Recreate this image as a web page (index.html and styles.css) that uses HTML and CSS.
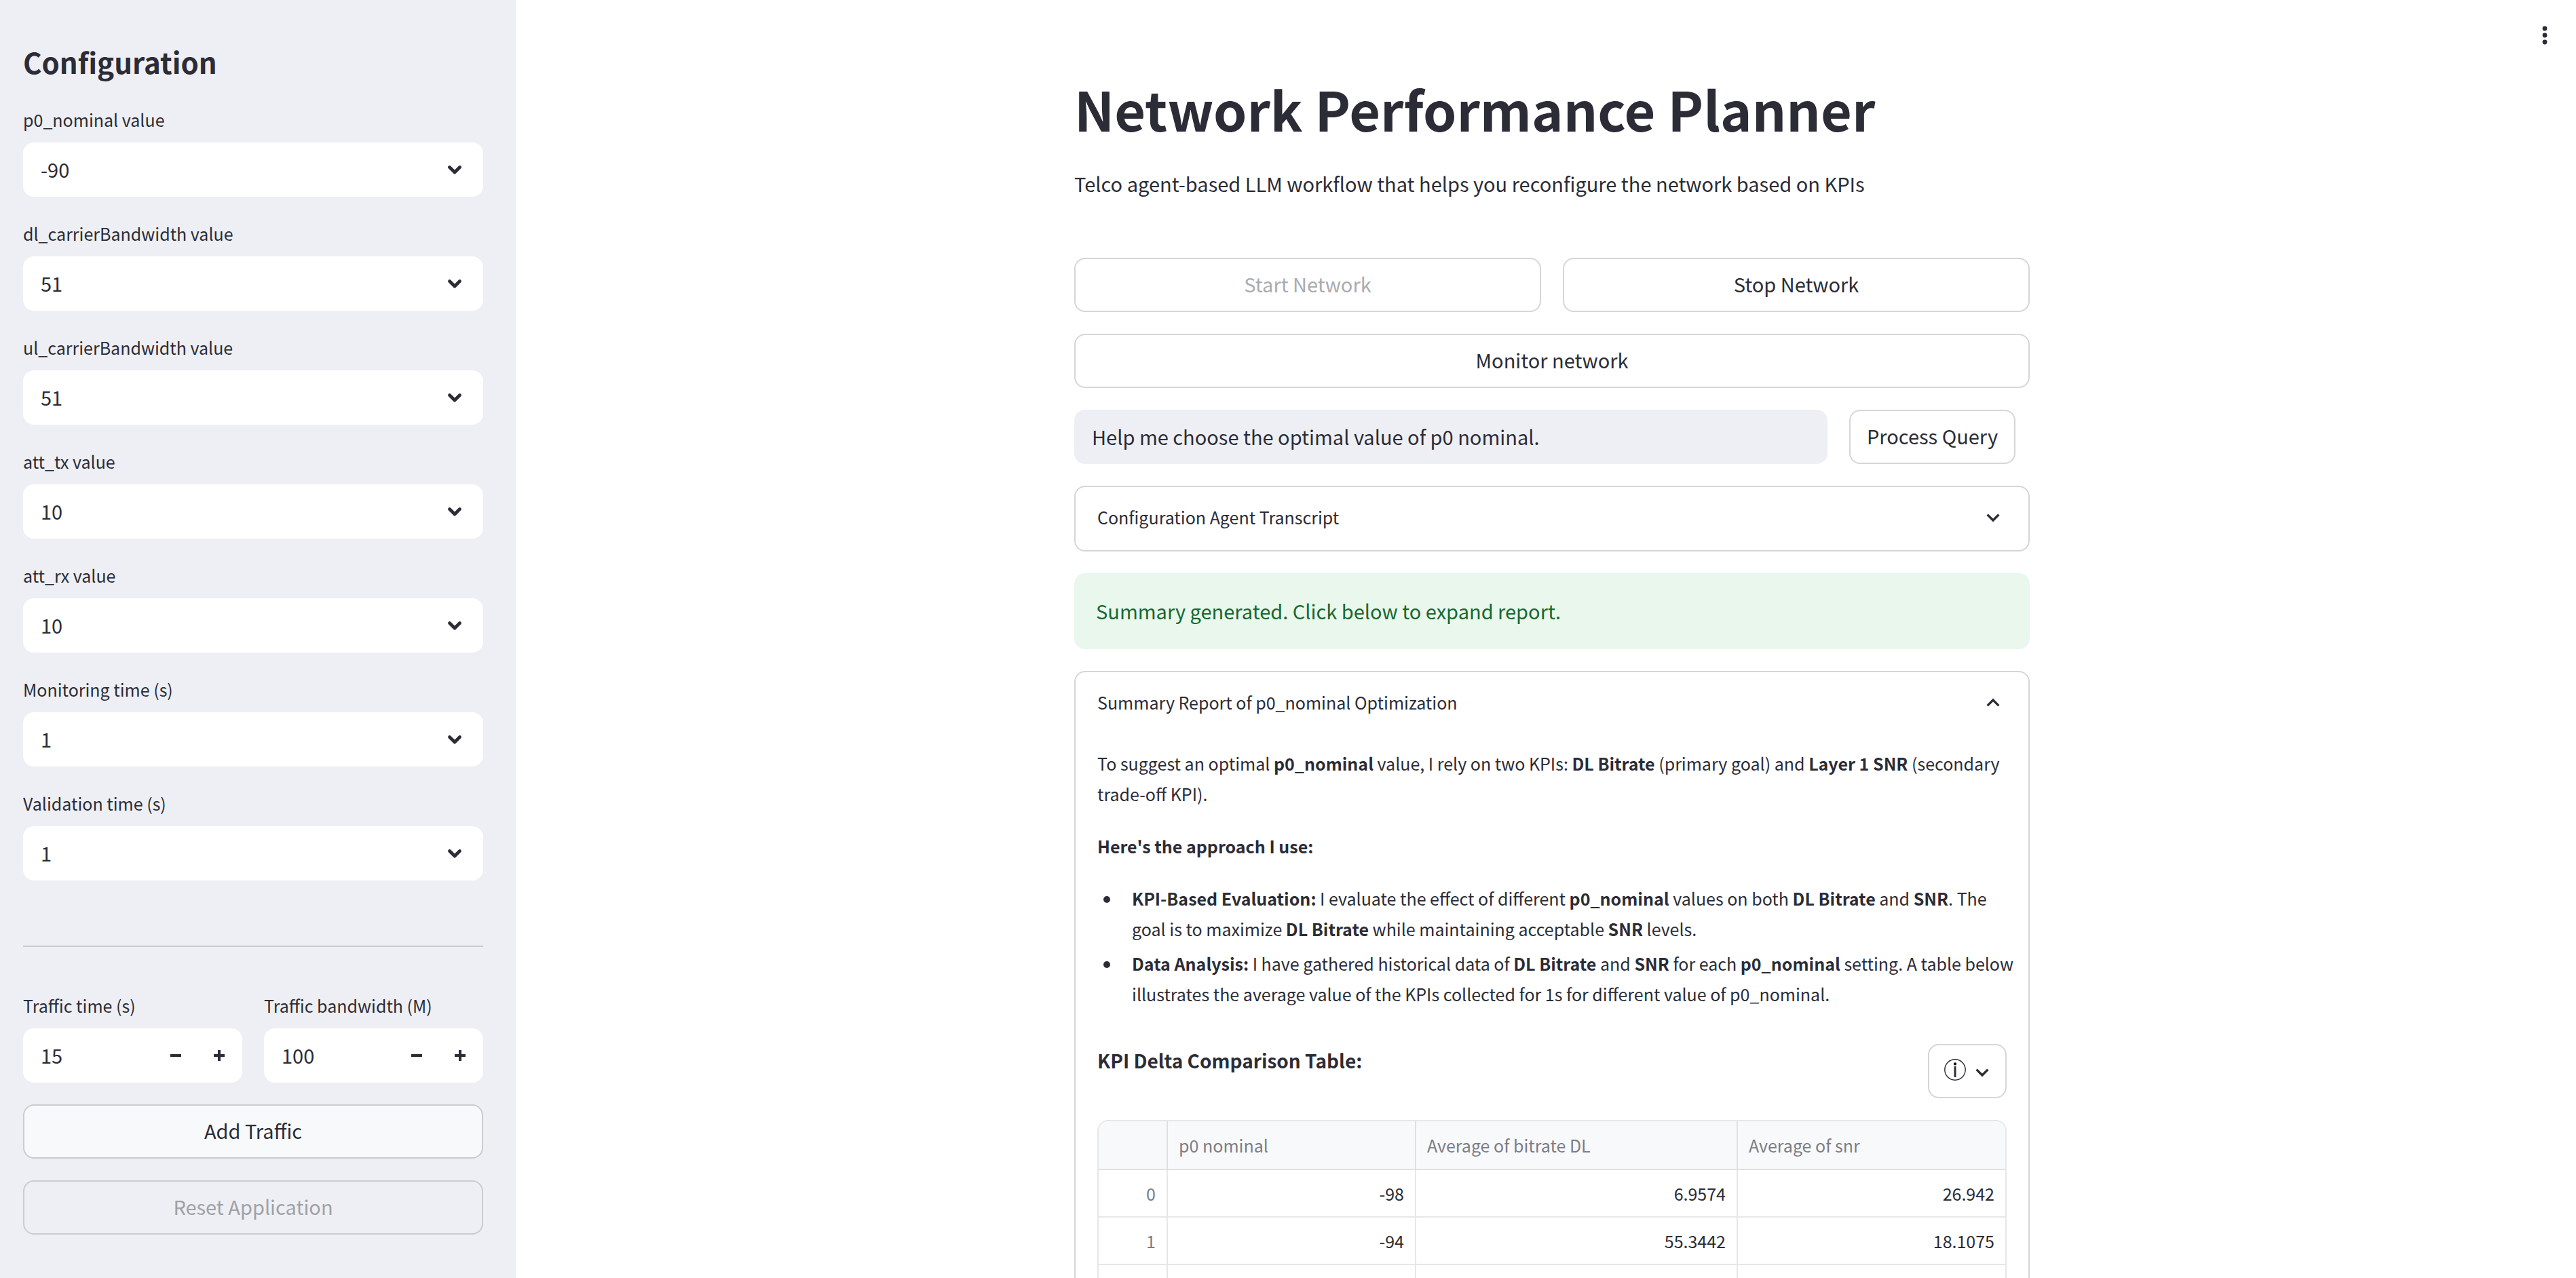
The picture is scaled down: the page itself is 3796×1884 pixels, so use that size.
FILE: index.html
```html
<!DOCTYPE html>
<html lang="en">
<head>
<meta charset="utf-8">
<title>Network Performance Planner</title>
<link rel="stylesheet" href="styles.css">
</head>
<body>
<svg class="sprite" aria-hidden="true">
  <symbol id="select-arrow" viewBox="0 0 32 32"><path d="M8.5 12.5l7.5 7.5 7.5-7.5" fill="none" stroke="currentColor" stroke-width="4.8" stroke-linecap="round" stroke-linejoin="round"/></symbol>
  <symbol id="chevron" viewBox="0 0 40 40"><path d="M11.6 15.6l8.4 8.4 8.4-8.4" fill="none" stroke="currentColor" stroke-width="3.4"/></symbol>
  <symbol id="minus" viewBox="0 0 16 16"><path d="M0 8h16" stroke="currentColor" stroke-width="4"/></symbol>
  <symbol id="plus" viewBox="0 0 16 16"><path d="M0 8h16M8 0v16" stroke="currentColor" stroke-width="4"/></symbol>
</svg>
<div class="app">
  <aside class="sidebar">
    <h2 class="sidebar-title">Configuration</h2>
    <div class="field">
      <label class="label" for="p0">p0_nominal value</label>
      <div class="select-box"><select class="select" id="p0"><option>-90</option></select><svg class="select-icon"><use href="#select-arrow"/></svg></div>
    </div>
    <div class="field">
      <label class="label" for="dl">dl_carrierBandwidth value</label>
      <div class="select-box"><select class="select" id="dl"><option>51</option></select><svg class="select-icon"><use href="#select-arrow"/></svg></div>
    </div>
    <div class="field">
      <label class="label" for="ul">ul_carrierBandwidth value</label>
      <div class="select-box"><select class="select" id="ul"><option>51</option></select><svg class="select-icon"><use href="#select-arrow"/></svg></div>
    </div>
    <div class="field">
      <label class="label" for="tx">att_tx value</label>
      <div class="select-box"><select class="select" id="tx"><option>10</option></select><svg class="select-icon"><use href="#select-arrow"/></svg></div>
    </div>
    <div class="field">
      <label class="label" for="rx">att_rx value</label>
      <div class="select-box"><select class="select" id="rx"><option>10</option></select><svg class="select-icon"><use href="#select-arrow"/></svg></div>
    </div>
    <div class="field">
      <label class="label" for="monitoring">Monitoring time (s)</label>
      <div class="select-box"><select class="select" id="monitoring"><option>1</option></select><svg class="select-icon"><use href="#select-arrow"/></svg></div>
    </div>
    <div class="field">
      <label class="label" for="validation">Validation time (s)</label>
      <div class="select-box"><select class="select" id="validation"><option>1</option></select><svg class="select-icon"><use href="#select-arrow"/></svg></div>
    </div>
    <hr class="divider">
    <div class="columns">
      <div class="field">
        <label class="label" for="time">Traffic time (s)</label>
        <div class="number-box">
          <input class="number" id="time" type="text" inputmode="numeric" value="15">
          <button class="step" type="button"><svg class="step-icon"><use href="#minus"/></svg></button>
          <button class="step" type="button"><svg class="step-icon"><use href="#plus"/></svg></button>
        </div>
      </div>
      <div class="field">
        <label class="label" for="bandwidth">Traffic bandwidth (M)</label>
        <div class="number-box">
          <input class="number" id="bandwidth" type="text" inputmode="numeric" value="100">
          <button class="step" type="button"><svg class="step-icon"><use href="#minus"/></svg></button>
          <button class="step" type="button"><svg class="step-icon"><use href="#plus"/></svg></button>
        </div>
      </div>
    </div>
    <button class="button button-tinted" type="button">Add Traffic</button>
    <button class="button" type="button" disabled>Reset Application</button>
  </aside>

  <main class="main">
    <button class="menu" type="button"><svg class="menu-icon" viewBox="0 0 8 28"><circle cx="4" cy="4" r="3.4"/><circle cx="4" cy="14" r="3.4"/><circle cx="4" cy="24" r="3.4"/></svg></button>
    <div class="content">
      <header class="intro">
        <h1 class="title">Network Performance Planner</h1>
        <p class="lead">Telco agent-based LLM workflow that helps you reconfigure the network based on KPIs</p>
      </header>
      <div class="columns">
        <button class="button" type="button" disabled>Start Network</button>
        <button class="button" type="button">Stop Network</button>
      </div>
      <button class="button" type="button">Monitor network</button>
      <form class="query">
        <input class="query-input" type="text" aria-labelledby="process" value="Help me choose the optimal value of p0 nominal.">
        <button class="button query-button" id="process" type="button">Process Query</button>
      </form>
      <details class="expander">
        <summary class="summary">Configuration Agent Transcript<svg class="chevron"><use href="#chevron"/></svg></summary>
      </details>
      <p class="alert">Summary generated. Click below to expand report.</p>
      <details class="expander" open>
        <summary class="summary">Summary Report of p0_nominal Optimization<svg class="chevron chevron-up"><use href="#chevron"/></svg></summary>
        <div class="report">
          <p>To suggest an optimal <strong>p0_nominal</strong> value, I rely on two KPIs: <strong>DL Bitrate</strong> (primary goal) and <strong>Layer 1 SNR</strong> (secondary trade-off KPI).</p>
          <p><strong>Here's the approach I use:</strong></p>
          <ul class="points">
            <li><strong>KPI-Based Evaluation:</strong> I evaluate the effect of different <strong>p0_nominal</strong> values on both <strong>DL Bitrate</strong> and <strong>SNR</strong>. The goal is to maximize <strong>DL Bitrate</strong> while maintaining acceptable <strong>SNR</strong> levels.</li>
            <li><strong>Data Analysis:</strong> I have gathered historical data of <strong>DL Bitrate</strong> and <strong>SNR</strong> for each <strong>p0_nominal</strong> setting. A table below illustrates the average value of the KPIs collected for 1s for different value of p0_nominal.</li>
          </ul>
          <div class="table-head">
            <h3 class="table-title">KPI Delta Comparison Table:</h3>
            <button class="button info" type="button"><svg class="info-icon" viewBox="0 0 32 32"><circle cx="16" cy="16" r="15.2" fill="none" stroke="currentColor" stroke-width="1.4"/><circle cx="16" cy="7.4" r="2.1"/><path d="M16 11v16" stroke="currentColor" stroke-width="3"/></svg><svg class="chevron"><use href="#chevron"/></svg></button>
          </div>
          <div class="table-frame">
            <table class="table">
              <colgroup><col class="col-index"><col class="col-p0"><col class="col-bitrate"><col></colgroup>
              <thead><tr><th></th><th>p0 nominal</th><th>Average of bitrate DL</th><th>Average of snr</th></tr></thead>
              <tbody>
                <tr><td>0</td><td>-98</td><td>6.9574</td><td>26.942</td></tr>
                <tr><td>1</td><td>-94</td><td>55.3442</td><td>18.1075</td></tr>
                <tr><td></td><td></td><td></td><td></td></tr>
              </tbody>
            </table>
          </div>
        </div>
      </details>
    </div>
  </main>
</div>
</body>
</html>
```
FILE: styles.css
```css
* { box-sizing: border-box; }

:root {
  --ink: #2b2c36;
  --muted: #7c7d85;
  --line: #d6d6d8;
  --panel: #eeeff4;
  --radius: 16px;
}

body {
  margin: 0;
  color: var(--ink);
  background: #fff;
  font-family: "Noto Sans CJK SC", "Noto Sans", sans-serif;
  font-size: 29px;
  line-height: 48px;
}

button, input, select { font: inherit; color: inherit; }
h1, h2, h3, p, ul { margin: 0; }
svg { display: block; }
.sprite { display: none; }

.app {
  display: grid;
  grid-template-columns: 760px minmax(0, 1fr);
  height: 100vh;
  overflow: hidden;
}

/* Sidebar */
.sidebar {
  display: flex;
  flex-direction: column;
  gap: 32px;
  padding: 60px 48px 64px 34px;
  background: var(--panel);
  overflow: hidden;
}
.sidebar-title {
  font-size: 42px;
  line-height: 62px;
  font-weight: 700;
}
.label {
  display: block;
  margin-bottom: 12px;
  font-size: 25px;
  line-height: 44px;
}
.select-box { display: grid; align-items: center; }
.select-box > * { grid-area: 1 / 1; }
.select {
  width: 100%;
  height: 80px;
  padding: 0 26px 2px;
  border: 0;
  border-radius: var(--radius);
  background: #fff;
  appearance: none;
}
.select-icon {
  justify-self: end;
  width: 32px;
  height: 32px;
  margin-right: 26px;
  pointer-events: none;
}
.divider {
  width: 100%;
  margin: 64px 0 32px;
  border: 0;
  border-top: 2px solid #c8c9cd;
}
.columns {
  display: grid;
  grid-template-columns: repeat(2, minmax(0, 1fr));
  gap: 32px;
}
.number-box {
  display: flex;
  height: 80px;
  border-radius: var(--radius);
  background: #fff;
}
.number {
  flex: 1;
  min-width: 0;
  padding: 0 26px 2px;
  border: 0;
  background: none;
}
.step {
  display: grid;
  place-items: center;
  width: 64px;
  padding: 0;
  border: 0;
  background: none;
}
.step:last-child { margin-right: 2px; }
.step-icon { width: 16px; height: 16px; }

.button {
  height: 80px;
  padding: 0 24px 4px;
  border: 2px solid var(--line);
  border-radius: var(--radius);
  background: #fff;
}
.button:disabled { color: #aaabaf; background: none; }
.button-tinted { background: #f8f9fb; }
.sidebar .button { border-color: #cbccd0; }
.sidebar .button:disabled { color: #a0a1a5; }

/* Main column */
.main {
  position: relative;
  padding: 108px 0 0 18px;
  overflow: hidden;
}
.menu {
  position: absolute;
  top: 38px;
  right: 42px;
  padding: 0;
  border: 0;
  background: none;
}
.menu-icon { width: 8px; height: 28px; fill: var(--ink); }
.content {
  display: flex;
  flex-direction: column;
  gap: 32px;
  max-width: 1408px;
  margin: 0 auto;
}
.intro { padding-bottom: 54px; }
.title {
  font-size: 79px;
  line-height: 104px;
  font-weight: 700;
}
.lead { margin-top: 34px; }
.query {
  display: grid;
  grid-template-columns: 1110fr 266fr;
  gap: 32px;
  justify-items: start;
}
.query-input {
  width: 100%;
  height: 80px;
  padding: 0 26px 2px;
  border: 0;
  border-radius: var(--radius);
  background: var(--panel);
}
.alert {
  padding: 31px 32px 33px;
  border-radius: var(--radius);
  color: #17682e;
  background: #e9f7ed;
}
.expander {
  border: 2px solid var(--line);
  border-radius: var(--radius);
  font-size: 25px;
  line-height: 45px;
}
.summary {
  display: flex;
  align-items: center;
  justify-content: space-between;
  padding: 22px 32px 26px;
  list-style: none;
}
.chevron { width: 40px; height: 40px; }
.chevron-up { transform: rotate(180deg); }
.report {
  display: flex;
  flex-direction: column;
  gap: 32px;
  padding: 19px 32px 32px;
}
.points {
  margin-right: -16px;
  padding-left: 51px;
  list-style: none;
}
.points li + li { margin-top: 6px; }
.points li::before {
  content: "";
  display: inline-block;
  width: 10px;
  height: 10px;
  margin: 0 32px 0 -42px;
  border-radius: 50%;
  background: var(--ink);
  vertical-align: 4px;
}

/* KPI table */
.table-head {
  display: flex;
  align-items: flex-start;
  justify-content: space-between;
  margin-top: 19px;
}
.table-title {
  font-size: 28px;
  line-height: 48px;
  font-weight: 700;
}
.info {
  display: flex;
  align-items: center;
  gap: 4px;
  padding: 0 14px 0 22px;
}
.info-icon { width: 32px; height: 32px; margin-bottom: 4px; }
.info .chevron { margin-top: 4px; }
.table-frame {
  border: 2px solid #e6e7e9;
  border-radius: var(--radius);
  overflow: hidden;
}
.table {
  width: 100%;
  table-layout: fixed;
  border-collapse: separate;
  border-spacing: 0;
}
.col-index { width: 102px; }
.col-p0 { width: 366px; }
.col-bitrate { width: 474px; }
.table th, .table td {
  height: 70px;
  padding: 0 16px;
  border: solid #e6e7e9;
  border-width: 0 2px 2px 0;
  text-align: right;
  font-weight: 400;
}
.table th {
  height: 72px;
  border-color: #dfe0e4;
  color: var(--muted);
  background: #f8f9fb;
  text-align: left;
}
.table td:first-child { color: var(--muted); }
.table th:last-child, .table td:last-child { border-right: 0; }
```
